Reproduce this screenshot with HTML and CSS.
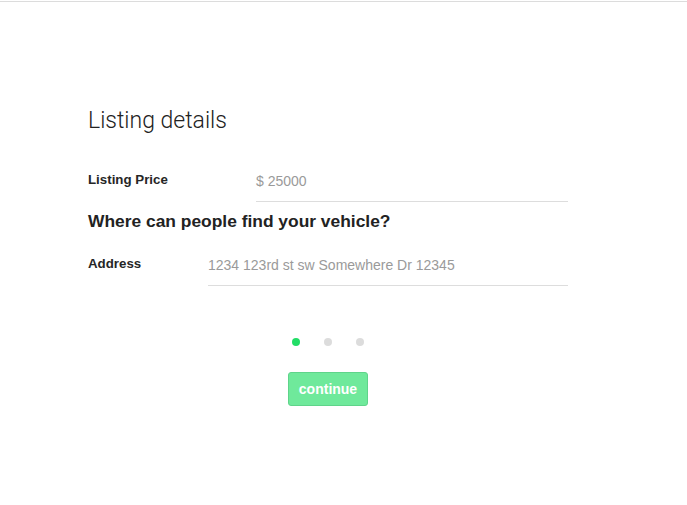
FILE: index.html
```html
<!DOCTYPE html>
<html>
<head>
<meta charset="utf-8">
<link rel="stylesheet" href="styles.css">
</head>
<body>
<div class="topbar"></div>
<main class="page">
  <h1 class="title">Listing details</h1>
  <div class="row row-price">
    <label class="label label-price">Listing Price</label>
    <div class="field field-price">$ 25000</div>
  </div>
  <h2 class="subtitle">Where can people find your vehicle?</h2>
  <div class="row row-address">
    <label class="label label-address">Address</label>
    <div class="field field-address">1234 123rd st sw Somewhere Dr 12345</div>
  </div>
  <div class="dots">
    <span class="dot active"></span>
    <span class="dot"></span>
    <span class="dot"></span>
  </div>
  <div class="actions">
    <button class="btn">continue</button>
  </div>
</main>
</body>
</html>
```
FILE: styles.css
```css
html, body {
  margin: 0;
  padding: 0;
  background: #fff;
}
body {
  font-family: "Liberation Sans", Arial, sans-serif;
  color: #222;
}
.topbar {
  height: 1px;
  border-bottom: 1px solid #dcdcdc;
}
.page {
  padding: 0 0 0 88px;
  width: 480px;
}
.title {
  margin: 104px 0 0;
  font-family: "Roboto", "Liberation Sans", sans-serif;
  font-weight: 300;
  font-size: 23px;
  line-height: 30px;
  color: #222;
}
.row {
  display: flex;
  align-items: flex-start;
}
.row-price {
  margin-top: 35px;
}
.label {
  font-size: 13.3px;
  font-weight: 700;
  line-height: 18px;
  color: #262626;
}
.label-price { width: 168px; }
.label-address { width: 120px; }
.field {
  flex: 1;
  font-size: 14px;
  line-height: 18px;
  color: #9a9a9a;
  padding: 1px 0 11px;
  border-bottom: 1px solid #ddd;
}
.subtitle {
  margin: 8px 0 0;
  font-size: 17.4px;
  font-weight: 700;
  line-height: 22px;
  color: #222;
}
.row-address {
  margin-top: 23px;
}
.dots {
  display: flex;
  justify-content: center;
  gap: 24px;
  margin: 52px 0 0 32px;
  width: 415px;
}
.dot {
  width: 8px;
  height: 8px;
  border-radius: 50%;
  background: #dcdcdc;
}
.dot.active {
  background: #22dd66;
}
.actions {
  display: flex;
  margin-top: 26px;
  padding-left: 200px;
}
.btn {
  width: 80px;
  height: 34px;
  border: 1px solid #5fd48a;
  border-radius: 3px;
  background: #6fe99b;
  color: #fff;
  font-family: "Liberation Sans", Arial, sans-serif;
  font-weight: 700;
  font-size: 14px;
  padding: 0;
}
```
